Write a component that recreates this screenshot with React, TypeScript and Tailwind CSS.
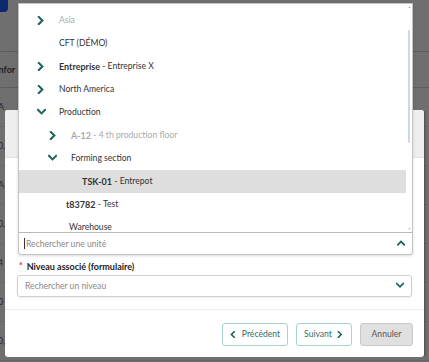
const teal = '#1b615c';

const Chevron = ({ dir, className = '' }: { dir: 'right' | 'down' | 'up' | 'left'; className?: string }) => {
  const paths: Record<string, string> = {
    right: 'M2 1 L6 5 L2 9',
    left: 'M6 1 L2 5 L6 9',
    down: 'M1 2 L5 6 L9 2',
    up: 'M1 6 L5 2 L9 6',
  };
  return (
    <svg viewBox="0 0 10 10" className={className} fill="none" stroke={teal} strokeWidth="2.2" strokeLinecap="square" strokeLinejoin="miter">
      <path d={paths[dir]} />
    </svg>
  );
};

type Item = {
  label: string;
  code?: string;
  chevron?: 'right' | 'down';
  chevX?: string;
  textX: string;
  muted?: boolean;
  active?: boolean;
};

const items: Item[] = [
  { label: 'Asia', chevron: 'right', chevX: 'left-[18px]', textX: 'pl-[40px]', muted: true },
  { label: 'CFT (DÉMO)', textX: 'pl-[40px]' },
  { code: 'Entreprise', label: 'Entreprise X', chevron: 'right', chevX: 'left-[18px]', textX: 'pl-[40px]' },
  { label: 'North America', chevron: 'right', chevX: 'left-[18px]', textX: 'pl-[40px]' },
  { label: 'Production', chevron: 'down', chevX: 'left-[18px]', textX: 'pl-[40px]' },
  { code: 'A-12', label: '4 th production floor', chevron: 'right', chevX: 'left-[30px]', textX: 'pl-[52px]', muted: true },
  { label: 'Forming section', chevron: 'down', chevX: 'left-[29px]', textX: 'pl-[52px]' },
  { code: 'TSK-01', label: 'Entrepot', textX: 'pl-[63px]', active: true },
  { code: 't83782', label: 'Test', textX: 'pl-[47px]' },
  { label: 'Warehouse', textX: 'pl-[50px]' },
];

const rows = ['A', '0,', 'A', '0,', '4', '0', '0,'];

export default function App() {
  return (
    <div className="relative w-[429px] h-[362px] overflow-hidden bg-[#6f6f6f] text-[8.6px] text-[#333]" style={{ fontFamily: 'Lato, "Open Sans", sans-serif' }}>
      {/* Page behind overlay */}
      <div className="flex flex-col">
        <div className="h-[52px] border-b border-[#5d5d5d]">
          <div className="w-[8px] h-[12px] bg-[#0c2a6b] rounded-br-sm" />
        </div>
        <div className="h-[36px] border-b border-[#5d5d5d] flex items-center font-bold text-[#1e1e1e] -ml-[4px] text-[9px]">Infor</div>
        {rows.map((r, i) => (
          <div key={i} className="h-[39px] border-b border-[#666] flex items-center -ml-[2px] text-[#2a2a2a] text-[9px]">{r}</div>
        ))}
      </div>

      {/* Modal */}
      <div className="absolute left-[5px] top-[110px] w-[419px] h-[247px] bg-white rounded-[3px] shadow-[2px_0_0_#5a5a5a] flex flex-col">
        <div className="h-[48px] bg-[#eeeeee] rounded-t-[3px] border-b border-[#e2e2e2]" />
        <div className="flex-1 flex flex-col px-[12px] pt-[100px]">
          <div className="flex items-center h-[17px] pl-[2px] gap-[4px]">
            <span className="text-[#d93025] font-bold">*</span>
            <span className="font-bold text-[9px] text-[#222]">Niveau associé (formulaire)</span>
          </div>
          <div className="h-[22px] border border-[#cfcfcf] rounded-[3px] shadow-[0_1px_2px_rgba(0,0,0,0.08)] flex items-center justify-between px-[7px]">
            <span className="text-[#888]">Rechercher un niveau</span>
            <Chevron dir="down" className="w-[8px] h-[8px]" />
          </div>
        </div>
        <div className="h-[48px] border-t border-[#ececec] flex items-center justify-end gap-[8px] px-[11px] pt-[2px]">
          <button className="h-[23px] w-[66px] border border-[#a9d3ce] rounded-[3px] flex items-center justify-center gap-[5px] text-[#2f6f6a]">
            <Chevron dir="left" className="w-[7px] h-[7px]" />
            Précédent
          </button>
          <button className="h-[23px] w-[56px] border border-[#a9d3ce] rounded-[3px] flex items-center justify-center gap-[5px] text-[#2f6f6a]">
            Suivant
            <Chevron dir="right" className="w-[7px] h-[7px]" />
          </button>
          <button className="h-[23px] w-[53px] border border-[#c9c9c9] bg-[#e0e0e0] rounded-[3px] text-[#555]">Annuler</button>
        </div>
      </div>

      {/* Dropdown */}
      <div className="absolute left-[18px] top-[3px] w-[395px] h-[252px] bg-white border border-[#c4c4c4] rounded-b-[3px] shadow-[0_1px_3px_rgba(0,0,0,0.15)] flex flex-col">
        <div className="relative h-[228px] overflow-hidden flex">
          <div className="flex-1 pt-[5px]">
            {items.map((it, i) => (
              <div key={i} className={`relative h-[23px] flex items-center ${it.textX} ${it.active ? 'bg-[#dedede]' : ''} ${it.muted ? 'text-[#a9a9a9]' : 'text-[#333]'}`}>
                {it.chevron && (
                  <Chevron dir={it.chevron} className={`absolute ${it.chevX} top-[7px] w-[9px] h-[9px]`} />
                )}
                {it.code && <span className="font-bold text-[9px]">{it.code}</span>}
                {it.code && <span>&nbsp;-&nbsp;</span>}
                <span>{it.label}</span>
              </div>
            ))}
          </div>
          <div className="w-[6px] relative">
            <div className="absolute left-[2px] top-[2px] text-[3px] leading-none text-[#999]">▲</div>
            <div className="absolute left-[2px] top-[26px] w-[2px] h-[113px] bg-[#cdd8e2] rounded" />
            <div className="absolute left-[2px] bottom-[1px] text-[3px] leading-none text-[#999]">▼</div>
          </div>
        </div>
        <div className="flex-1 border-t border-[#b8b8b8] flex items-center justify-between pl-[5px] pr-[7px] pt-[1px]">
          <span className="flex items-center text-[#888]">
            <span className="w-px h-[11px] bg-[#333] mr-[1px]" />
            Rechercher une unité
          </span>
          <Chevron dir="up" className="w-[8px] h-[8px]" />
        </div>
      </div>
    </div>
  );
}
